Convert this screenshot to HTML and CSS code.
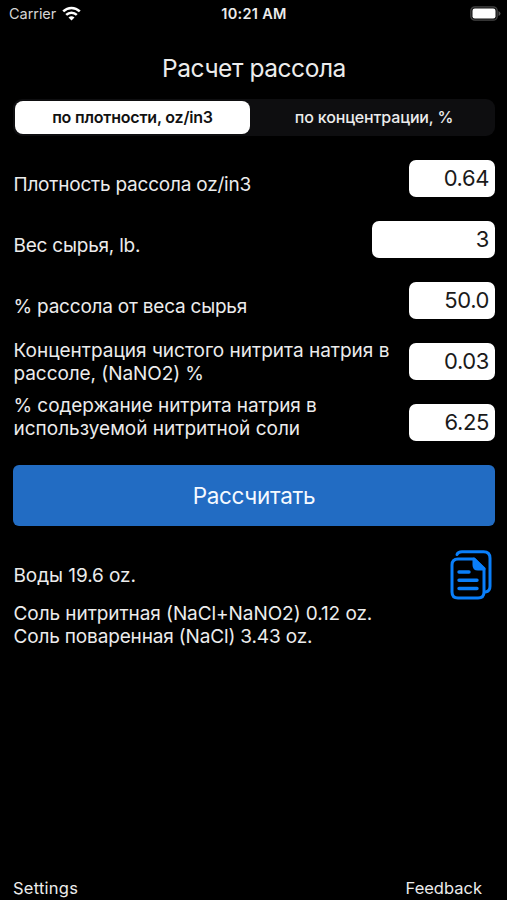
FILE: index.html
```html
<!DOCTYPE html>
<html lang="ru">
<head>
<meta charset="utf-8">
<title>Расчет рассола</title>
<link rel="stylesheet" href="styles.css">
</head>
<body>
<header class="status">
  <div class="carrier"><span class="carrier-name">Carrier</span>
    <svg class="wifi" width="19" height="15" viewBox="0 0 19 15" fill="none" stroke="#fff" stroke-width="2.5"><path d="M1.200 5.400C6 .7 13 .7 17.800 5.400M4.200 8.900c3-2.900 7.600-2.900 10.600 0"/><path d="M9.500 14.600l-3-3q3-2.500 6 0z" fill="#fff" stroke="none"/></svg>
  </div>
  <time class="clock">10:21 AM</time>
  <svg class="battery" width="31" height="15" viewBox="0 0 31 15"><rect x=".8" y=".8" width="26.400" height="13.400" rx="4" fill="#111" stroke="#444" stroke-width="1.300"/><rect x="2.500" y="2.500" width="23" height="10" rx="2.300" fill="#fff"/><path d="M28.500 5q2 1 2 2.500t-2 2.500z" fill="#555"/></svg>
</header>
<main>
  <h1 class="title"><span>Расчет рассола</span></h1>
  <div class="segments">
    <div class="segment active"><span class="seg-a">по плотности, oz/in3</span></div>
    <div class="segment"><span class="seg-b">по концентрации, %</span></div>
  </div>
  <section class="form">
    <div class="row low"><div class="label"><span class="tight">Плотность рассола oz/in3</span></div><div class="field"><span>0.64</span></div></div>
    <div class="row low"><div class="label"><span class="tight">Вес сырья, lb.</span></div><div class="field wide"><span>3</span></div></div>
    <div class="row low"><div class="label"><span class="tight">% рассола от веса сырья</span></div><div class="field"><span>50.0</span></div></div>
    <div class="row"><div class="label"><span>Концентрация чистого нитрита натрия в</span><br><span class="snug">рассоле, (NaNO2) %</span></div><div class="field"><span>0.03</span></div></div>
    <div class="row high"><div class="label"><span class="snug">% содержание нитрита натрия в</span><br><span>используемой нитритной соли</span></div><div class="field"><span>6.25</span></div></div>
  </section>
  <div class="button"><span>Рассчитать</span></div>
  <section class="results">
    <div class="water"><span class="snug">Воды 19.6 oz.</span>
      <svg class="copy" width="42" height="50" viewBox="0 0 42 50" fill="none" stroke="#0a7ffa" stroke-width="3" stroke-linecap="round" stroke-linejoin="round"><path d="M7 4.500Q8 1.800 12 1.800h21.500q6.500 0 6.500 6.500v28q0 5-4.500 5.800"/><path d="M24 9H8q-6 0-6 6v27q0 6 6 6h20q6 0 6-6V18.500z"/><path d="M24 9v6q0 4 4 4h6z" fill="#0a7ffa"/><path d="M9 22h10M9 30.200h18M9 38.500h18" stroke-width="3.400"/></svg>
    </div>
    <div class="salts"><span class="snug">Соль нитритная (NaCl+NaNO2) 0.12 oz.</span><br><span class="tight">Соль поваренная (NaCl) 3.43 oz.</span></div>
  </section>
</main>
<footer class="footer"><span class="settings">Settings</span><span class="feedback">Feedback</span></footer>
</body>
</html>
```
FILE: styles.css
```css
* { box-sizing: border-box; }
body {
  margin: 0;
  width: 507px;
  height: 900px;
  overflow: hidden;
  display: flex;
  flex-direction: column;
  background: #000;
  color: #ececec;
  font-family: Inter, "Liberation Sans", sans-serif;
  font-size: 19px;
  line-height: 23px;
  white-space: nowrap;
}
.status {
  display: grid;
  grid-template-columns: 1fr auto 1fr;
  align-items: center;
  height: 27px;
  padding: 0 6px 0 9px;
  font-size: 14.500px;
}
.carrier { display: flex; align-items: center; gap: 6px; color: #d5d5d5; }
.carrier-name { letter-spacing: -0.05px; }
.wifi { margin-top: -1px; }
.clock { font-weight: 600; font-size: 14.500px; letter-spacing: 0.3px; margin-left: -2px; }
.battery { justify-self: end; }
main { flex: 1; padding: 0 12px 0 13px; }
.title {
  margin: 0;
  height: 72px;
  padding-top: 26px;
  font-size: 24.500px;
  letter-spacing: -0.43px;
  line-height: 30px;
  font-weight: 400;
  text-align: center;
}
.segments {
  display: grid;
  grid-template-columns: 235px 1fr;
  height: 37px;
  padding: 2px;
  border-radius: 9px;
  background: #0e0e10;
  font-size: 16px;
  font-weight: 500;
}
.segment { display: flex; align-items: center; justify-content: center; border-radius: 8px; }
.segment.active { background: #fff; color: #111; font-weight: 600; }
.seg-a { letter-spacing: -0.2px; }
.seg-b { letter-spacing: -0.15px; padding-left: 5px; }
.form { margin-top: 12px; }
.row { display: flex; height: 61px; align-items: center; justify-content: space-between; }
.label, .water, .salts { padding-left: 0.5px; }
.low .label { padding-top: 12px; }
.high .label { padding-bottom: 12px; }
.tight { letter-spacing: -0.22px; }
.snug { letter-spacing: -0.07px; }
.salts .tight { letter-spacing: -0.16px; }
.field {
  display: flex;
  align-items: center;
  justify-content: flex-end;
  width: 86px;
  height: 37px;
  padding-right: 6px;
  border-radius: 7px;
  background: #fff;
  color: #1a1a1a;
  font-size: 22px;
  letter-spacing: -0.4px;
}
.wide { width: 123px; }
.button {
  display: flex;
  align-items: center;
  justify-content: center;
  height: 61px;
  margin-top: 12px;
  border-radius: 6px;
  background: #226cc3;
  color: #f4f9ff;
  font-size: 22.500px;
  letter-spacing: -0.3px;
}
.results { margin-top: 24px; }
.water { display: flex; align-items: center; justify-content: space-between; height: 50px; padding-right: 3px; }
.salts { margin-top: 2px; }
.footer {
  display: flex;
  justify-content: space-between;
  height: 23px;
  padding: 0 25px 0 13px;
  font-size: 16.500px;
}
.settings { letter-spacing: 0.25px; }
```
